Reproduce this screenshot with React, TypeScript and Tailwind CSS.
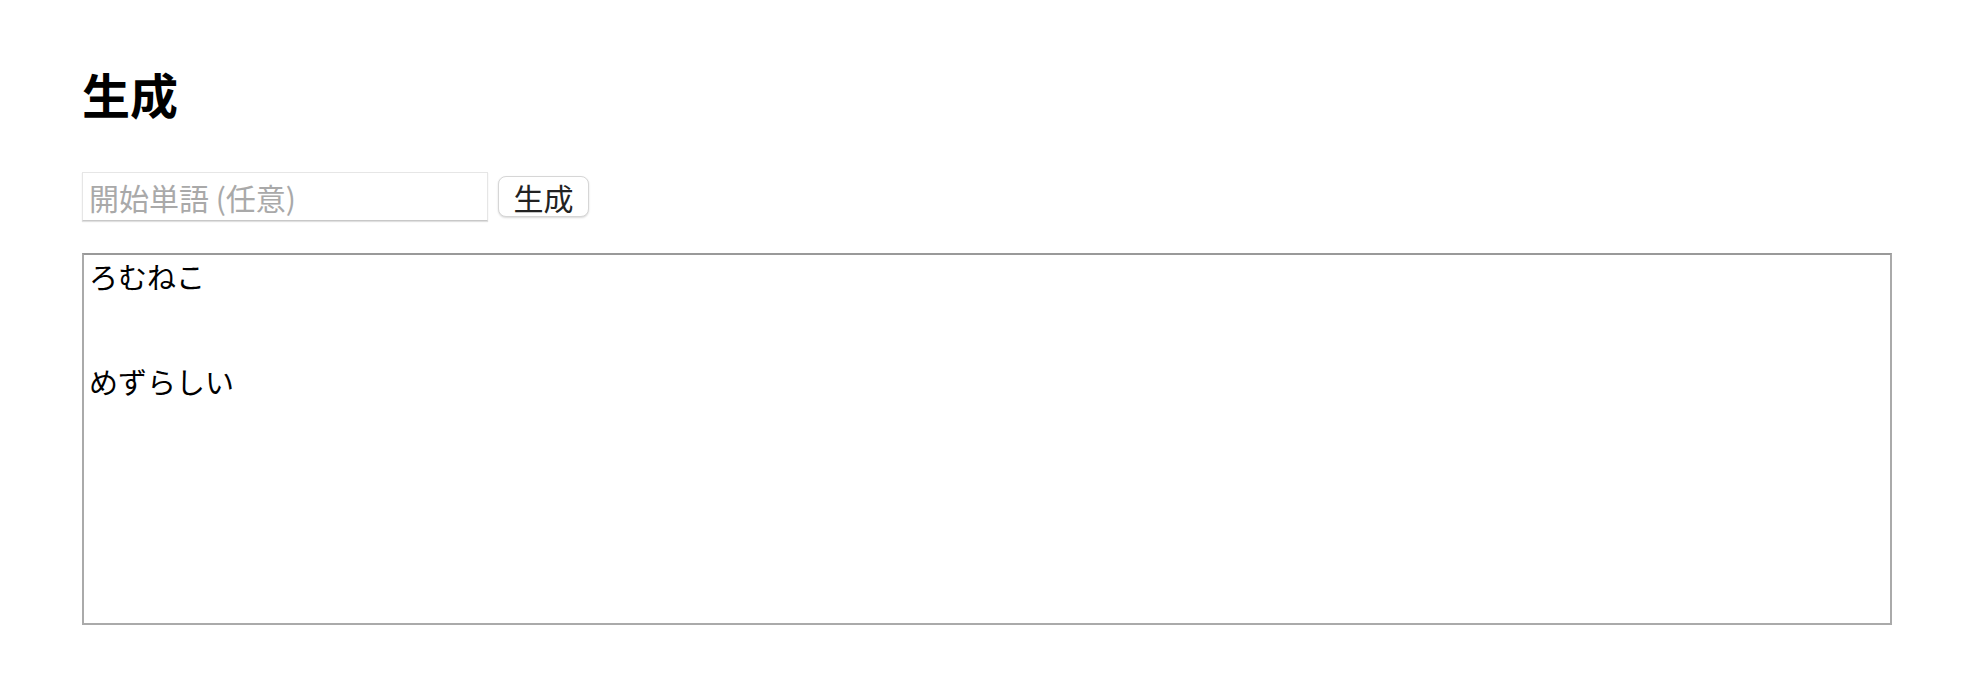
import { useState } from 'react'

const FONT = 'font-["Noto_Sans_CJK_JP","Noto_Sans",sans-serif]'

export default function App() {
  const [word, setWord] = useState('')
  const [out] = useState('ろむねこ\n\n\nめずらしい')

  return (
    <div className={`${FONT} min-h-[678px] bg-white px-[82px] pt-[69px] text-black`}>
      <h1 className="text-[48px] font-bold leading-[48px]">生成</h1>

      {/* input row */}
      <div className="mt-[55px] flex items-center gap-[10px]">
        <input
          value={word}
          onChange={(e) => setWord(e.target.value)}
          placeholder="開始単語 (任意)"
          className="h-[49px] w-[406px] border border-[#e6e6e6] border-b-[#c8c8c8] px-[6px] text-[30px] text-[#222] shadow-[0_1px_1px_rgba(0,0,0,0.12)] outline-none placeholder:text-[#a9a9a9]"
        />
        <button className="h-[41px] w-[91px] rounded-[8px] border border-[#d6d6d6] bg-white text-[30px] leading-none text-[#222] shadow-[0_1px_2px_rgba(0,0,0,0.15)]">
          生成
        </button>
      </div>

      {/* output */}
      <textarea
        readOnly
        value={out}
        className="mt-[32px] block h-[372px] w-[1810px] resize-none border-2 border-[#aaaaaa] border-t-[#999999] px-[5px] py-[4px] text-[29px] leading-[35px] text-black outline-none"
      />
    </div>
  )
}
